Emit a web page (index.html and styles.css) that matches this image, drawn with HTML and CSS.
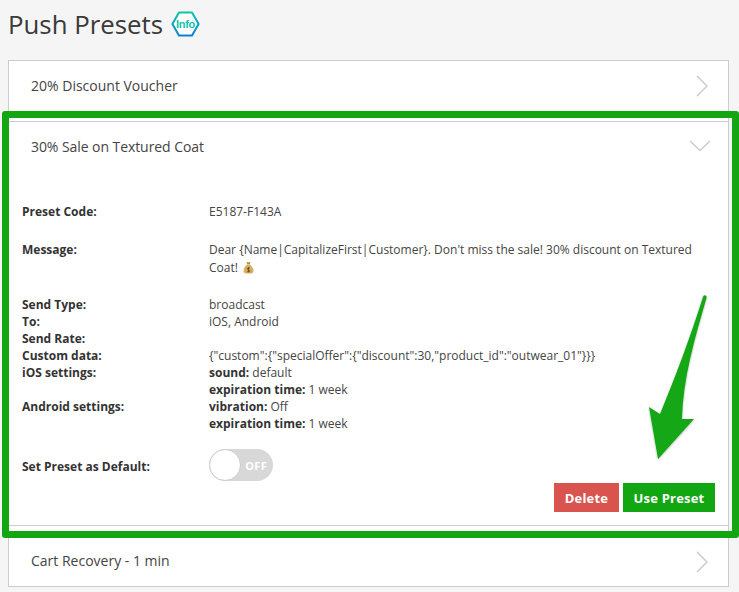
FILE: index.html
```html
<!DOCTYPE html>
<html lang="en">
<head>
<meta charset="utf-8">
<title>Push Presets</title>
<link rel="stylesheet" href="styles.css">
</head>
<body>
<div class="page">
  <header class="head">
    <h1 class="title">Push Presets</h1>
    <span class="info">
      <svg class="info-hex" width="29" height="26" viewBox="0 0 29 26" aria-hidden="true">
        <defs><linearGradient id="ig" x1="0" y1="0" x2="0" y2="1"><stop offset="0" stop-color="#0cc6a6"/><stop offset="1" stop-color="#0d7fd8"/></linearGradient></defs>
        <path d="M8 1.5H21L27.6 13L21 24.5H8L1.4 13Z" fill="#fff" stroke="url(#ig)" stroke-width="2" stroke-linejoin="round"/>
      </svg>
      <span class="info-text">Info</span>
    </span>
  </header>
  <section class="panels">
    <div class="panel closed top">
      <div class="panel-head">
        <span>20% Discount Voucher</span>
        <svg class="chev" width="12" height="22" viewBox="0 0 12 22"><path d="M1 1L11 11L1 21" fill="none" stroke="#ccc" stroke-width="1.5"/></svg>
      </div>
    </div>
    <div class="panel open">
      <div class="panel-head">
        <span>30% Sale on Textured Coat</span>
        <svg class="chev-down" width="20" height="12" viewBox="0 0 20 12"><path d="M0 1L10 10.5L20 1" fill="none" stroke="#ccc" stroke-width="1.5"/></svg>
      </div>
      <div class="panel-body">
        <dl class="row first"><dt>Preset Code:</dt><dd>E5187-F143A</dd></dl>
        <dl class="row message"><dt>Message:</dt><dd>Dear {Name|CapitalizeFirst|Customer}. Don't miss the sale! 30% discount on Textured Coat! <svg class="bag" width="11" height="13" viewBox="0 0 11 13" aria-hidden="true"><path d="M3.5 .8L5.5 1.6L7.5 .8L6.8 3.2H4.2Z" fill="#b98a3c"/><path d="M4 3.6H7C8.5 5 10.5 7.6 10.5 10C10.5 12 9 12.6 5.5 12.6S.5 12 .5 10C.5 7.6 2.5 5 4 3.6Z" fill="#d9ad5b"/><path d="M5.5 6V11M7 7.3C6 6.6 4.2 6.8 4.2 7.9S7 8.8 7 10S5 11.2 4 10.5" fill="none" stroke="#5b4a25" stroke-width=".8"/></svg></dd></dl>
        <div class="details">
          <dl class="row"><dt>Send Type:</dt><dd>broadcast</dd></dl>
          <dl class="row"><dt>To:</dt><dd>iOS, Android</dd></dl>
          <dl class="row"><dt>Send Rate:</dt><dd></dd></dl>
          <dl class="row"><dt>Custom data:</dt><dd>{"custom":{"specialOffer":{"discount":30,"product_id":"outwear_01"}}}</dd></dl>
          <dl class="row"><dt>iOS settings:</dt><dd><b>sound:</b> default<br><b>expiration time:</b> 1 week</dd></dl>
          <dl class="row"><dt>Android settings:</dt><dd><b>vibration:</b> Off<br><b>expiration time:</b> 1 week</dd></dl>
        </div>
        <div class="row default-row">
          <div class="label">Set Preset as Default:</div>
          <div class="toggle"><span class="knob"></span><span class="off">OFF</span></div>
        </div>
        <div class="actions">
          <button class="btn red" type="button">Delete</button>
          <button class="btn green" type="button">Use Preset</button>
        </div>
      </div>
    </div>
    <div class="panel closed bottom">
      <div class="panel-head">
        <span>Cart Recovery - 1 min</span>
        <svg class="chev" width="12" height="22" viewBox="0 0 12 22"><path d="M1 1L11 11L1 21" fill="none" stroke="#ccc" stroke-width="1.5"/></svg>
      </div>
    </div>
  </section>
</div>
<div class="highlight"></div>
<svg class="arrow" width="64" height="172" viewBox="0 0 64 172" aria-hidden="true">
  <defs><filter id="as" x="-20%" y="-10%" width="140%" height="120%"><feDropShadow dx="0" dy="1" stdDeviation="1" flood-color="#000" flood-opacity=".3"/></filter></defs>
  <path d="M59.5 2.2C61.3 2 62 3.5 61.5 5C50 45 38 85 37 126L49 126L13 166L4 114L15 121C30 85 45 45 58 4C58.3 3 58.8 2.3 59.5 2.2Z" fill="#12a712" filter="url(#as)"/>
</svg>
</body>
</html>
```

FILE: styles.css
```css
* { box-sizing: border-box; }
html, body { margin: 0; padding: 0; }
body {
  position: relative;
  width: 739px;
  height: 592px;
  overflow: hidden;
  background: #f5f5f5;
  color: #333;
  font-family: "Open Sans", sans-serif;
  font-size: 12px;
}
.page { padding: 0 10px 0 8px; }
.head {
  display: flex;
  align-items: center;
  gap: 8px;
  height: 60px;
  padding: 0 0 12px 0;
}
.title {
  margin: 0;
  font-size: 25.8px;
  font-weight: 400;
  line-height: 36px;
  color: #3a3a3a;
}
.info { position: relative; display: block; flex: none; width: 29px; height: 26px; }
.info-hex { display: block; }
.info-text {
  position: absolute;
  left: 0;
  top: 0;
  width: 29px;
  line-height: 26px;
  text-align: center;
  font-family: "Liberation Sans Narrow", "Liberation Sans", sans-serif;
  font-size: 11px;
  font-weight: 700;
  letter-spacing: -.3px;
  color: #12bfb0;
}
.panels { display: flex; flex-direction: column; }
.panel {
  background: #fff;
  border: 1px solid #ccc;
}
.closed { height: 62px; display: flex; }
.top { align-items: flex-start; }
.top span { margin-bottom: 2px; }
.bottom { align-items: flex-end; }
.bottom span { margin-bottom: 4px; }
.open, .bottom { margin-top: -1px; }
.panel-head {
  flex: 1;
  display: flex;
  align-items: center;
  justify-content: space-between;
  height: 50px;
  padding: 0 20px 0 22px;
  font-size: 14px;
  color: #444;
}
.open > .panel-head, .bottom > .panel-head { height: 48px; }
.open > .panel-head { padding-right: 18px; }
.open > .panel-head span { letter-spacing: -.07px; }
.chev { flex: none; }
.chev-down { flex: none; }
.panel-body { padding: 33px 13px 13px 13px; }
.row {
  display: grid;
  grid-template-columns: 187px 1fr;
  margin: 0;
  line-height: 17px;
}
.row dt, .label { font-weight: 700; color: #333; }
.label { padding-top: 2px; }
.row dd { margin: 0; color: #444; min-height: 17px; }
.row dd b { color: #333; }
.first { margin-bottom: 21px; }
.message { line-height: 18px; margin-bottom: 19px; height: 36px; }
.bag { vertical-align: -2px; margin-left: 2px; }
.default-row { align-items: center; margin-top: 17px; }
.toggle {
  position: relative;
  display: flex;
  justify-content: flex-end;
  align-items: center;
  width: 64px;
  height: 32px;
  padding-right: 6px;
  background: #d8d8d8;
  border-radius: 16px;
}
.knob {
  position: absolute;
  left: 0;
  top: 0;
  width: 32px;
  height: 32px;
  background: #fff;
  border: 1px solid #ccc;
  border-radius: 50%;
}
.off { color: #fff; font-size: 11px; font-weight: 700; letter-spacing: .3px; }
.actions {
  display: flex;
  justify-content: flex-end;
  gap: 4px;
  margin-top: 2px;
}
.btn {
  height: 29px;
  border: 0;
  color: #fff;
  font-family: "Open Sans", sans-serif;
  font-size: 13px;
  font-weight: 700;
  letter-spacing: .2px;
  padding: 0;
}
.red { width: 65px; background: #d9534f; }
.green { width: 92px; background: #12a712; }
.highlight {
  position: absolute;
  left: 2px;
  top: 111px;
  width: 737px;
  height: 427px;
  border: 7px solid #12a712;
  border-radius: 3px;
  pointer-events: none;
}
.arrow { position: absolute; left: 645px; top: 293px; }
```
